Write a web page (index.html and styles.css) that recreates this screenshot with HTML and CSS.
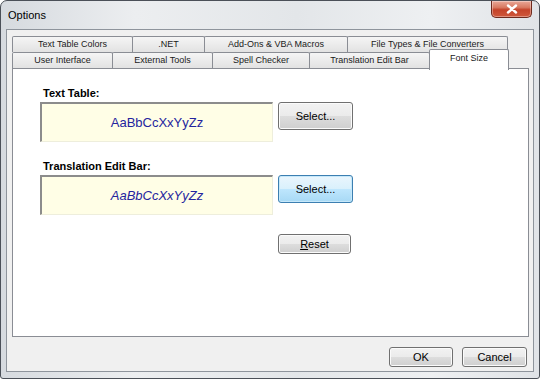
FILE: index.html
```html
<!DOCTYPE html>
<html lang="en">
<head>
  <meta charset="UTF-8">
  <meta name="viewport" content="width=device-width, initial-scale=1.0">
  <title>Options</title>
  <link rel="stylesheet" href="styles.css">
</head>
<body>
  <div class="window">
    <div class="titlebar">
      <span class="title">Options</span>
      <button class="close" title="Close">
        <svg width="12" height="10" viewBox="0 0 12 10">
          <path d="M2 1.5 L10 8.5 M10 1.5 L2 8.5" stroke="#fff" stroke-width="2.4" stroke-linecap="round"/>
        </svg>
      </button>
    </div>

    <div class="client">
      <div class="tabs">
        <div class="tab-row">
          <div class="tab w-colors">Text Table Colors</div>
          <div class="tab w-net">.NET</div>
          <div class="tab w-addons">Add-Ons &amp; VBA Macros</div>
          <div class="tab w-filetypes">File Types &amp; File Converters</div>
        </div>
        <div class="tab-row">
          <div class="tab w-ui">User Interface</div>
          <div class="tab w-tools">External Tools</div>
          <div class="tab w-spell">Spell Checker</div>
          <div class="tab w-teb">Translation Edit Bar</div>
          <div class="tab w-font selected">Font Size</div>
        </div>
      </div>

      <div class="panel">
        <div class="label">Text Table:</div>
        <div class="preview">AaBbCcXxYyZz</div>
        <button class="btn select">Select...</button>

        <div class="label second">Translation Edit Bar:</div>
        <div class="preview italic">AaBbCcXxYyZz</div>
        <button class="btn select focus">Select...</button>

        <button class="btn reset"><u>R</u>eset</button>
      </div>

      <div class="actions">
        <button class="btn ok">OK</button>
        <button class="btn cancel">Cancel</button>
      </div>
    </div>
  </div>
</body>
</html>
```

FILE: styles.css
```css
* {
  box-sizing: border-box;
}

body {
  margin: 0;
  padding: 0;
  width: 540px;
  height: 379px;
  overflow: hidden;
  background-color: #ffffff;
  font-family: 'Liberation Sans', Arial, sans-serif;
}

.window {
  width: 540px;
  height: 379px;
  display: flex;
  flex-direction: column;
  border: 1px solid #4b5058;
  border-radius: 7px 7px 3px 3px;
  padding: 0 5px 6px 5px;
  background: linear-gradient(90deg, #d6dadf 0%, #eceef0 25%, #e3e6e9 55%, #eef0f2 80%, #e0e3e7 100%);
}

.titlebar {
  height: 28px;
  display: flex;
  justify-content: space-between;
  align-items: flex-start;
  padding-left: 2px;
}

.titlebar .title {
  font-size: 11px;
  color: #000;
  line-height: 28px;
}

.titlebar .close {
  width: 41px;
  height: 17px;
  margin-right: 2px;
  padding: 0;
  border: 1px solid #6e2a1e;
  border-top: none;
  border-radius: 0 0 5px 5px;
  background: linear-gradient(#e9a898 0%, #d87a62 40%, #c4432a 55%, #d0583c 100%);
  display: flex;
  align-items: center;
  justify-content: center;
  box-shadow: inset 0 0 0 1px rgba(255, 255, 255, 0.35);
}

.client {
  flex: 1;
  display: flex;
  flex-direction: column;
  border: 1px solid #8e949c;
  background-color: #f0f0f0;
  padding: 6px 4px 0 5px;
}

/* tabs */
.tabs {
  height: 32px;
}

.tab-row {
  display: flex;
  height: 16px;
}

.tab {
  height: 16px;
  border: 1px solid #8a8d94;
  border-bottom: none;
  border-radius: 2px 2px 0 0;
  margin-left: -1px;
  background: linear-gradient(#f5f5f5, #e2e2e2);
  font-size: 9px;
  line-height: 15px;
  text-align: center;
  color: #1a1a1a;
  white-space: nowrap;
}

.tab:first-child {
  margin-left: 0;
}

.w-colors { width: 121px; }
.w-net { width: 73px; }
.w-addons { width: 144px; }
.w-filetypes { width: 161px; }
.w-ui { width: 101px; }
.w-tools { width: 101px; }
.w-spell { width: 98px; }
.w-teb { width: 121px; }
.w-font { width: 80px; }

.tab.selected {
  position: relative;
  z-index: 1;
  height: 21px;
  margin-top: -3px;
  background: #ffffff;
  line-height: 15px;
  padding-top: 1px;
}

/* panel */
.panel {
  height: 269px;
  border: 1px solid #8a8d94;
  background-color: #ffffff;
  padding: 18px 0 0 27px;
  display: grid;
  grid-template-columns: 233px 75px;
  column-gap: 5px;
  align-content: start;
  align-items: start;
}

.label {
  grid-column: 1 / 3;
  font-size: 11px;
  font-weight: bold;
  line-height: 13px;
  padding-left: 3px;
  margin-bottom: 2px;
  color: #000;
}

.label.second {
  margin-top: 18px;
}

.preview {
  height: 40px;
  background-color: #fffee6;
  border-top: 2px solid #8c8c8c;
  border-left: 2px solid #8c8c8c;
  border-right: 1px solid #eeeedc;
  border-bottom: 1px solid #eeeedc;
  color: #24249e;
  font-size: 13px;
  line-height: 37px;
  text-align: center;
}

.preview.italic {
  font-style: italic;
}

/* buttons */
.btn {
  font-family: 'Liberation Sans', Arial, sans-serif;
  font-size: 11px;
  color: #000;
  padding: 0;
  border: 1px solid #707070;
  border-radius: 3px;
  background: linear-gradient(#f2f2f2 0%, #ebebeb 50%, #dddddd 51%, #cfcfcf 100%);
  box-shadow: inset 0 0 0 1px #fbfbfb;
}

.btn.focus {
  border-color: #3c7fb1;
  background: linear-gradient(#eaf6fd 0%, #d9f0fc 50%, #bee6fd 51%, #a7d9f5 100%);
  box-shadow: inset 0 0 0 1px #c6e8fa;
}

.btn.select {
  height: 28px;
  width: 75px;
}

.btn.reset {
  grid-column: 2;
  width: 73px;
  height: 20px;
  margin-top: 19px;
}

.actions {
  display: flex;
  justify-content: flex-end;
  gap: 9px;
  padding: 10px 2px 0 0;
}

.btn.ok {
  width: 64px;
  height: 20px;
}

.btn.cancel {
  width: 65px;
  height: 20px;
}
```
